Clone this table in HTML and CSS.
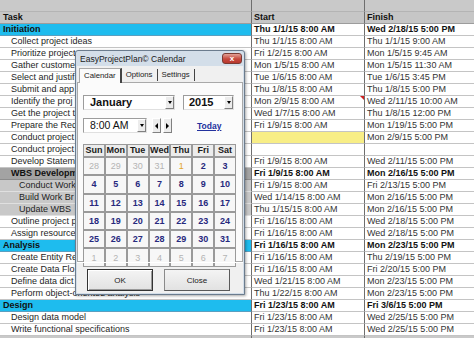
FILE: index.html
```html
<!DOCTYPE html>
<html>
<head>
<meta charset="utf-8">
<link rel="stylesheet" href="styles.css">
</head>
<body>
<div class="sheet">
  <div class="row top"><div class="c task"></div><div class="c start"></div><div class="c fin"></div></div>
  <div class="row head"><div class="c task">Task</div><div class="c start">Start</div><div class="c fin">Finish</div></div>
  <div class="row phase"><div class="c task">Initiation</div><div class="c start">Thu 1/1/15 8:00 AM</div><div class="c fin">Wed 2/18/15 5:00 PM</div></div>
  <div class="row"><div class="c task">Collect project ideas</div><div class="c start">Thu 1/1/15 8:00 AM</div><div class="c fin">Thu 1/1/15 9:00 AM</div></div>
  <div class="row"><div class="c task">Prioritize project</div><div class="c start">Fri 1/2/15 8:00 AM</div><div class="c fin">Mon 1/5/15 9:45 AM</div></div>
  <div class="row"><div class="c task">Gather custome</div><div class="c start">Mon 1/5/15 8:00 AM</div><div class="c fin">Mon 1/5/15 11:30 AM</div></div>
  <div class="row"><div class="c task">Select and justif</div><div class="c start">Tue 1/6/15 8:00 AM</div><div class="c fin">Tue 1/6/15 3:45 PM</div></div>
  <div class="row"><div class="c task">Submit and app</div><div class="c start">Thu 1/8/15 8:00 AM</div><div class="c fin">Thu 1/8/15 5:00 PM</div></div>
  <div class="row"><div class="c task">Identify the proj</div><div class="c start note">Mon 2/9/15 8:00 AM</div><div class="c fin">Wed 2/11/15 10:00 AM</div></div>
  <div class="row"><div class="c task">Get the project t</div><div class="c start">Wed 1/7/15 8:00 AM</div><div class="c fin">Thu 1/8/15 12:00 PM</div></div>
  <div class="row"><div class="c task">Prepare the Req</div><div class="c start">Fri 1/9/15 8:00 AM</div><div class="c fin">Mon 1/19/15 5:00 PM</div></div>
  <div class="row"><div class="c task">Conduct project</div><div class="c start hl"></div><div class="c fin">Mon 2/9/15 5:00 PM</div></div>
  <div class="row"><div class="c task">Conduct project</div><div class="c start"></div><div class="c fin"></div></div>
  <div class="row"><div class="c task">Develop Statem</div><div class="c start">Fri 1/9/15 8:00 AM</div><div class="c fin">Wed 2/11/15 5:00 PM</div></div>
  <div class="row wbs"><div class="c task">WBS Developm</div><div class="c start">Fri 1/9/15 8:00 AM</div><div class="c fin">Mon 2/16/15 5:00 PM</div></div>
  <div class="row sub"><div class="c task">Conduct Work</div><div class="c start">Fri 1/9/15 8:00 AM</div><div class="c fin">Fri 2/13/15 5:00 PM</div></div>
  <div class="row sub"><div class="c task">Build Work Br</div><div class="c start">Wed 1/14/15 8:00 AM</div><div class="c fin">Mon 2/16/15 5:00 PM</div></div>
  <div class="row sub"><div class="c task">Update WBS</div><div class="c start">Thu 1/15/15 8:00 AM</div><div class="c fin">Mon 2/16/15 5:00 PM</div></div>
  <div class="row"><div class="c task">Outline project p</div><div class="c start">Fri 1/16/15 8:00 AM</div><div class="c fin">Wed 2/18/15 5:00 PM</div></div>
  <div class="row"><div class="c task">Assign resource</div><div class="c start">Fri 1/16/15 8:00 AM</div><div class="c fin">Wed 2/18/15 5:00 PM</div></div>
  <div class="row phase"><div class="c task">Analysis</div><div class="c start">Fri 1/16/15 8:00 AM</div><div class="c fin">Mon 2/23/15 5:00 PM</div></div>
  <div class="row"><div class="c task">Create Entity Re</div><div class="c start">Fri 1/16/15 8:00 AM</div><div class="c fin">Thu 2/19/15 5:00 PM</div></div>
  <div class="row"><div class="c task">Create Data Flo</div><div class="c start">Fri 1/16/15 8:00 AM</div><div class="c fin">Fri 2/20/15 5:00 PM</div></div>
  <div class="row"><div class="c task">Define data dict</div><div class="c start">Wed 1/21/15 8:00 AM</div><div class="c fin">Mon 2/23/15 5:00 PM</div></div>
  <div class="row"><div class="c task">Perform object-oriented analysis</div><div class="c start">Thu 1/22/15 8:00 AM</div><div class="c fin">Mon 2/23/15 5:00 PM</div></div>
  <div class="row phase"><div class="c task">Design</div><div class="c start">Fri 1/23/15 8:00 AM</div><div class="c fin">Fri 3/6/15 5:00 PM</div></div>
  <div class="row"><div class="c task">Design data model</div><div class="c start">Fri 1/23/15 8:00 AM</div><div class="c fin">Wed 2/25/15 5:00 PM</div></div>
  <div class="row"><div class="c task">Write functional specifications</div><div class="c start">Fri 1/23/15 8:00 AM</div><div class="c fin">Wed 2/25/15 5:00 PM</div></div>
  <div class="row top"><div class="c task"></div><div class="c start"></div><div class="c fin"></div></div>
</div>

<div class="dlg">
  <div class="titlebar">
    <span class="title">EasyProjectPlan© Calendar</span>
    <span class="xbtn">x</span>
  </div>
  <div class="client">
    <div class="tabs">
      <span class="tab sel">Calendar</span>
      <span class="tab">Options</span>
      <span class="tab">Settings</span>
    </div>
    <div class="page">
      <div class="line1">
        <div class="combo month"><span class="val">January</span><span class="drop"><i></i></span></div>
        <div class="combo year"><span class="val">2015</span><span class="drop"><i></i></span></div>
      </div>
      <div class="line2">
        <div class="combo time"><span class="val">8:00 AM</span><span class="drop"><i></i></span></div>
        <span class="spin"><i class="l"></i></span>
        <span class="spin"><i class="r"></i></span>
        <a class="today">Today</a>
      </div>
      <div class="cal">
        <div class="hd">Sun</div><div class="hd">Mon</div><div class="hd">Tue</div><div class="hd">Wed</div><div class="hd">Thu</div><div class="hd">Fri</div><div class="hd">Sat</div>
        <div class="d o">28</div><div class="d o">29</div><div class="d o">30</div><div class="d o">31</div><div class="d cur">1</div><div class="d">2</div><div class="d">3</div>
        <div class="d">4</div><div class="d">5</div><div class="d">6</div><div class="d">7</div><div class="d">8</div><div class="d">9</div><div class="d">10</div>
        <div class="d">11</div><div class="d">12</div><div class="d">13</div><div class="d">14</div><div class="d">15</div><div class="d">16</div><div class="d">17</div>
        <div class="d">18</div><div class="d">19</div><div class="d">20</div><div class="d">21</div><div class="d">22</div><div class="d">23</div><div class="d">24</div>
        <div class="d">25</div><div class="d">26</div><div class="d">27</div><div class="d">28</div><div class="d">29</div><div class="d">30</div><div class="d">31</div>
        <div class="d o">1</div><div class="d o">2</div><div class="d o">3</div><div class="d o">4</div><div class="d o">5</div><div class="d o">6</div><div class="d o">7</div>
      </div>
    </div>
    <div class="btns">
      <span class="btn def">OK</span>
      <span class="btn">Close</span>
    </div>
  </div>
</div>
</body>
</html>
```

FILE: styles.css
```css
html, body {
  margin: 0;
  padding: 0;
  background: #fff;
  overflow: hidden;
}
body {
  width: 474px;
  height: 338px;
  position: relative;
  font-family: "Liberation Sans", Arial, sans-serif;
}
.sheet {
  display: flex;
  flex-direction: column;
}
.row {
  display: grid;
  grid-template-columns: 252px 113px 109px;
  height: 12px;
}
.c {
  box-sizing: border-box;
  height: 12px;
  border-bottom: 1px solid #c4c4c4;
  font-size: 9px;
  line-height: 11px;
  white-space: nowrap;
  overflow: hidden;
  color: #1e1e1e;
}
.c.task {
  padding-left: 11px;
  border-right: 1px solid #6e6e6e;
}
.c.start {
  padding-left: 2px;
  border-right: 1px solid #6e6e6e;
  color: #333;
  position: relative;
}
.c.fin {
  padding-left: 2px;
  color: #333;
}
.row.top .c {
  background: #c9c9c9;
  border-bottom-color: #b4b4b4;
}
.row.head .c {
  background: #c6c6c6;
  font-weight: bold;
  color: #111;
  border-bottom-color: #9c9c9c;
}
.row.head .c.task {
  padding-left: 3px;
}
.row.phase .c {
  font-weight: bold;
  color: #111;
}
.row.phase .c.task {
  background: #1ebcee;
  padding-left: 3px;
  border-bottom-color: #5a9fc0;
}
.row.wbs .c {
  font-weight: bold;
  color: #111;
}
.row.wbs .c.task {
  background: #a3a3a3;
  border-bottom-color: #8c8c8c;
}
.row.sub .c.task {
  background: #c8c8c8;
  padding-left: 19px;
  border-bottom-color: #e0e0e0;
}
.c.hl {
  background: #f8ee86;
}
.c.note::after {
  content: "";
  position: absolute;
  right: 0;
  top: 0;
  border-top: 4px solid #d02020;
  border-left: 4px solid transparent;
}

/* dialog */
.dlg {
  position: absolute;
  left: 75px;
  top: 50px;
  width: 170px;
  height: 245px;
  box-sizing: border-box;
  border: 1px solid #6b7c8e;
  border-radius: 3px 3px 0 0;
  background: #d3dee9;
  padding: 0 1px 1px;
  display: flex;
  flex-direction: column;
  box-shadow: 1px 1px 3px rgba(0,0,0,0.35);
}
.titlebar {
  height: 15px;
  flex: none;
  display: flex;
  align-items: center;
  justify-content: space-between;
  padding: 0 1px 0 3px;
}
.title {
  font-size: 8.5px;
  color: #1a1a1a;
}
.xbtn {
  width: 20px;
  height: 11px;
  box-sizing: border-box;
  border: 1px solid #7a3a32;
  border-radius: 3px;
  background: linear-gradient(#e3a196, #c7493d 55%, #b8382e);
  color: #fff;
  font-size: 8px;
  font-weight: bold;
  line-height: 9px;
  text-align: center;
}
.client {
  flex: 1;
  background: #f0f0f0;
  display: flex;
  flex-direction: column;
}
.tabs {
  height: 16px;
  flex: none;
  display: flex;
  align-items: flex-end;
  padding-left: 2px;
  box-sizing: border-box;
}
.tab {
  font-size: 7.8px;
  color: #222;
  height: 12px;
  line-height: 11px;
  padding: 0 4px 0 4px;
  border-right: 1px solid #444;
  box-sizing: border-box;
  margin-bottom: 1px;
}
.tab.sel {
  background: #fbfbfb;
  height: 15px;
  line-height: 14px;
  margin-bottom: -1px;
  border: 1px solid #a9a9a9;
  border-bottom: none;
  border-right: 2px solid #444;
  position: relative;
  z-index: 1;
}
.page {
  height: 180px;
  flex: none;
  box-sizing: border-box;
  background: #fbfbfb;
  border: 1px solid #a9a9a9;
  padding: 12px 0 0 5px;
  display: flex;
  flex-direction: column;
}
.line1, .line2 {
  display: flex;
  align-items: center;
  height: 15px;
}
.line2 {
  margin-top: 8px;
}
.combo {
  box-sizing: border-box;
  height: 15px;
  border: 1px solid #9c9c9c;
  border-right-color: #e0e0e0;
  border-bottom-color: #e0e0e0;
  background: #fff;
  display: flex;
  align-items: stretch;
}
.combo .val {
  flex: 1;
  font-size: 11px;
  font-weight: bold;
  line-height: 13px;
  padding-left: 6px;
  color: #111;
}
.month { width: 92px; }
.year { width: 51px; margin-left: 8px; }
.year .val { padding-left: 5px; }
.time { width: 64px; }
.time .val {
  font-weight: normal;
  font-size: 10.5px;
}
.drop, .spin {
  width: 9px;
  box-sizing: border-box;
  background: #ececec;
  border: 1px solid #fff;
  border-right-color: #808080;
  border-bottom-color: #808080;
  display: flex;
  align-items: center;
  justify-content: center;
}
.drop i {
  border-top: 3px solid #000;
  border-left: 2.5px solid transparent;
  border-right: 2.5px solid transparent;
}
.spin {
  height: 15px;
  margin-left: 2px;
  border-color: #fff #808080 #808080 #fff;
}
.spin i.l {
  border-right: 3px solid #000;
  border-top: 3px solid transparent;
  border-bottom: 3px solid transparent;
}
.spin i.r {
  border-left: 3px solid #000;
  border-top: 3px solid transparent;
  border-bottom: 3px solid transparent;
}
.time + .spin { margin-left: 5px; }
.today {
  margin-left: 25px;
  font-size: 8.5px;
  font-weight: bold;
  color: #23329e;
  text-decoration: underline;
}
.cal {
  margin-top: 11px;
  width: 153px;
  display: grid;
  grid-template-columns: repeat(7, 1fr);
  grid-template-rows: 11px repeat(6, 16.3px);
  gap: 2px;
  background: #9a9a9a;
  border: 1px solid #9a9a9a;
  box-sizing: border-box;
}
.hd {
  background: #ececec;
  font-size: 9px;
  font-weight: bold;
  color: #1a1a1a;
  text-align: center;
  line-height: 11px;
}
.d {
  background: #f7f7f7;
  font-size: 9px;
  font-weight: bold;
  color: #27297e;
  display: flex;
  align-items: center;
  justify-content: center;
}
.d.o {
  color: #b4b4b4;
  font-weight: normal;
}
.d.cur {
  color: #e2a52a;
  font-weight: normal;
}
.btns {
  flex: 1;
  display: flex;
  align-items: flex-start;
  padding: 6px 0 0 10px;
  gap: 11px;
  border-top: 1px solid #fff;
}
.btn {
  width: 66px;
  height: 22px;
  box-sizing: border-box;
  border: 1px solid #8a8a8a;
  border-right-color: #5a5a5a;
  border-bottom-color: #5a5a5a;
  background: linear-gradient(#f4f4f4, #e2e2e2);
  font-size: 8px;
  color: #222;
  display: flex;
  align-items: center;
  justify-content: center;
}
.btn.def {
  border: 1px solid #333;
  box-shadow: inset 1px 1px 0 #fff, inset -1px -1px 0 #9a9a9a;
}
```
